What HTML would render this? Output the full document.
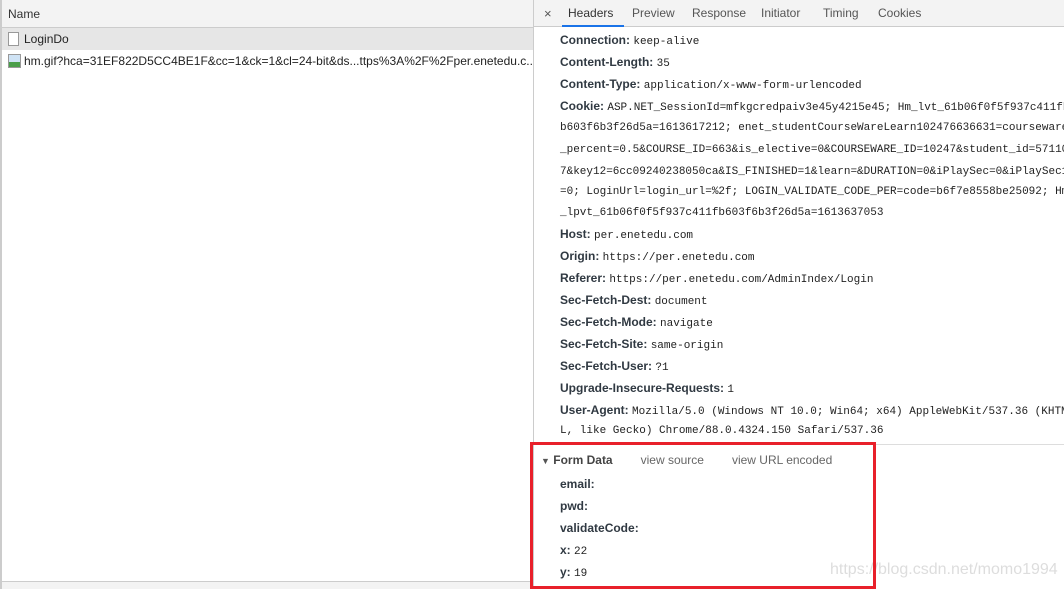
<!DOCTYPE html>
<html><head><style>
*{margin:0;padding:0;box-sizing:border-box}
body{width:1064px;height:589px;overflow:hidden;background:#fff;font-family:"Liberation Sans",sans-serif;font-size:12px;color:#222;position:relative}
.left{position:absolute;left:0;top:0;width:534px;height:589px;border-left:2px solid #ccc;border-right:1px solid #ccc}
.lh{height:28px;background:#f3f3f3;border-bottom:1px solid #ccc;padding-left:6px;line-height:28px;color:#333}
.row{height:22px;line-height:22px;padding-left:6px;white-space:nowrap;overflow:hidden;color:#222}
.sel{background:#e6e6e6}
.doc{display:inline-block;width:11px;height:14px;border:1px solid #999;background:#fff;vertical-align:-3px;margin-right:5px}
.img{display:inline-block;width:13px;height:14px;border:1px solid #999;background:linear-gradient(#cfe3f5 60%,#4a9e4a 60%);vertical-align:-3px;margin-right:3px}
.bot{position:absolute;left:0;right:0;top:581px;height:8px;background:#f3f3f3;border-top:1px solid #ccc}
.right{position:absolute;left:534px;top:0;right:0;height:589px;overflow:hidden}
.tabs{height:27px;background:#f3f3f3;border-bottom:1px solid #ccc;position:relative}
.tab{position:absolute;top:0;line-height:27px;color:#555;font-size:12px}
.l{position:absolute;left:26px;white-space:nowrap;line-height:16px;font-size:12px}
.l b{color:#303942;font-weight:bold}
.m{font-family:"Liberation Mono",monospace;font-size:11px;color:#222}
.red{position:absolute;left:530px;top:442px;width:346px;height:147px;border:3px solid #e8202a}
</style></head><body>
<div class="left">
<div class="lh">Name</div>
<div class="row sel"><span class="doc"></span>LoginDo</div>
<div class="row"><span class="img"></span>hm.gif?hca=31EF822D5CC4BE1F&amp;cc=1&amp;ck=1&amp;cl=24-bit&amp;ds...ttps%3A%2F%2Fper.enetedu.c...</div>
<div class="bot"></div>
</div>
<div class="right">
<div class="tabs">
<span class="tab" style="left:10px;color:#555;font-size:13px">×</span>
<span class="tab" style="left:34px;color:#333">Headers</span>
<div style="position:absolute;left:28px;top:25px;width:62px;height:2px;background:#1a73e8"></div>
<span class="tab" style="left:98px">Preview</span>
<span class="tab" style="left:158px">Response</span>
<span class="tab" style="left:227px">Initiator</span>
<span class="tab" style="left:289px">Timing</span>
<span class="tab" style="left:344px">Cookies</span>
</div>
<div class="l" style="top:32px"><b>Connection:</b> <span class="m">keep-alive</span></div>
<div class="l" style="top:54px"><b>Content-Length:</b> <span class="m">35</span></div>
<div class="l" style="top:76px"><b>Content-Type:</b> <span class="m">application/x-www-form-urlencoded</span></div>
<div class="l" style="top:98px"><b>Cookie:</b> <span class="m">ASP.NET_SessionId=mfkgcredpaiv3e45y4215e45; Hm_lvt_61b06f0f5f937c411fb6</span></div>
<div class="l m" style="top:120px">b603f6b3f26d5a=1613617212; enet_studentCourseWareLearn102476636631=coursewarelearn</div>
<div class="l m" style="top:142px">_percent=0.5&amp;COURSE_ID=663&amp;is_elective=0&amp;COURSEWARE_ID=10247&amp;student_id=571107</div>
<div class="l m" style="top:164px">7&amp;key12=6cc09240238050ca&amp;IS_FINISHED=1&amp;learn=&amp;DURATION=0&amp;iPlaySec=0&amp;iPlaySec1</div>
<div class="l m" style="top:184px">=0; LoginUrl=login_url=%2f; LOGIN_VALIDATE_CODE_PER=code=b6f7e8558be25092; Hm</div>
<div class="l m" style="top:205px">_lpvt_61b06f0f5f937c411fb603f6b3f26d5a=1613637053</div>
<div class="l" style="top:226px"><b>Host:</b> <span class="m">per.enetedu.com</span></div>
<div class="l" style="top:248px"><b>Origin:</b> <span class="m">https://per.enetedu.com</span></div>
<div class="l" style="top:270px"><b>Referer:</b> <span class="m">https://per.enetedu.com/AdminIndex/Login</span></div>
<div class="l" style="top:292px"><b>Sec-Fetch-Dest:</b> <span class="m">document</span></div>
<div class="l" style="top:314px"><b>Sec-Fetch-Mode:</b> <span class="m">navigate</span></div>
<div class="l" style="top:336px"><b>Sec-Fetch-Site:</b> <span class="m">same-origin</span></div>
<div class="l" style="top:358px"><b>Sec-Fetch-User:</b> <span class="m">?1</span></div>
<div class="l" style="top:380px"><b>Upgrade-Insecure-Requests:</b> <span class="m">1</span></div>
<div class="l" style="top:402px"><b>User-Agent:</b> <span class="m">Mozilla/5.0 (Windows NT 10.0; Win64; x64) AppleWebKit/537.36 (KHTML</span></div>
<div class="l m" style="top:423px">L, like Gecko) Chrome/88.0.4324.150 Safari/537.36</div>
<div style="position:absolute;left:0;right:0;top:444px;border-top:1px solid #ddd"></div>
<div class="l" style="top:452px;left:7px"><span style="font-size:9px;color:#555">▼</span> <b style="color:#444">Form Data</b><span style="color:#666;margin-left:28px">view source</span><span style="color:#666;margin-left:28px">view URL encoded</span></div>
<div class="l" style="top:476px"><b>email:</b></div>
<div class="l" style="top:498px"><b>pwd:</b></div>
<div class="l" style="top:520px"><b>validateCode:</b></div>
<div class="l" style="top:542px"><b>x:</b> <span class="m">22</span></div>
<div class="l" style="top:564px"><b>y:</b> <span class="m">19</span></div>
<div style="position:absolute;left:296px;top:561px;font-size:16px;color:#ddd;white-space:nowrap">https://blog.csdn.net/momo1994</div>
</div>
<div class="red"></div>
</body></html>
